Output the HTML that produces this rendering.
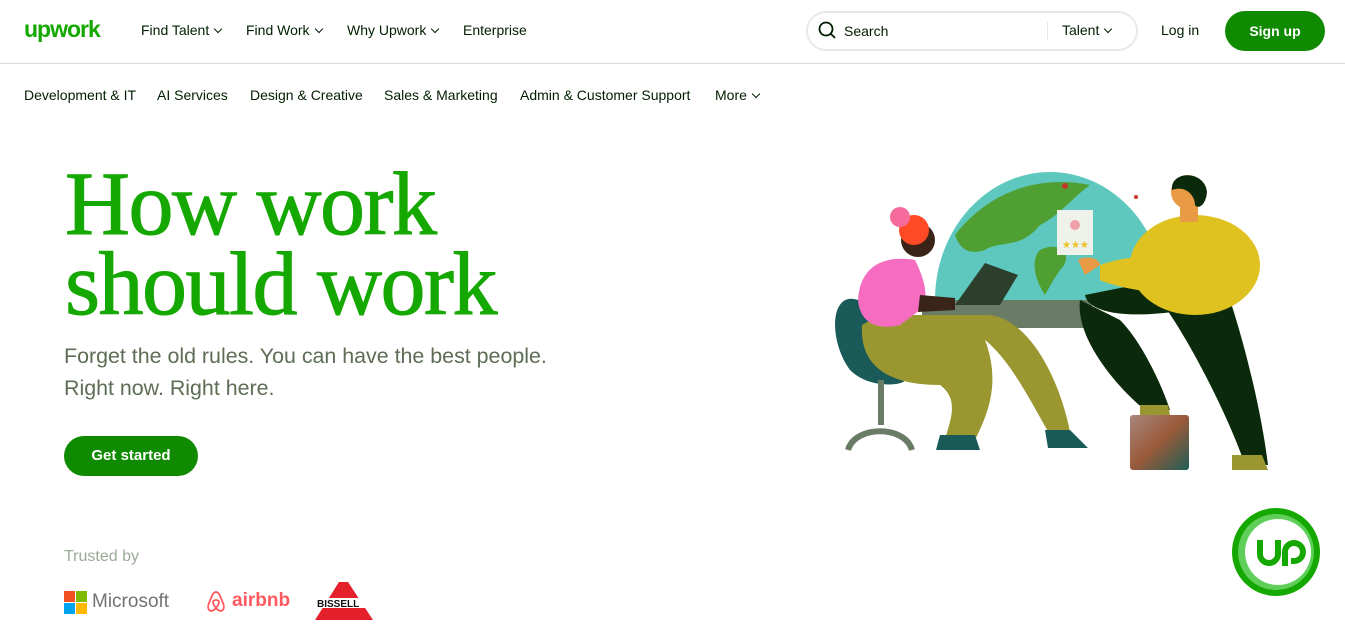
<!DOCTYPE html>
<html><head><meta charset="utf-8"><style>
*{margin:0;padding:0;box-sizing:border-box}
body{width:1345px;height:631px;overflow:hidden;background:#fff;font-family:"Liberation Sans",Arial,sans-serif;color:#001e00;position:relative}
.a{position:absolute;white-space:nowrap}
.nav{font-size:14px;color:#001e00}
.chev{display:inline-block;width:6px;height:6px;border-right:1.5px solid #001e00;border-bottom:1.5px solid #001e00;transform:rotate(45deg);margin-left:6px;position:relative;top:-3px}
</style></head><body>
<div class="a" style="left:24px;top:16px;font-size:23px;font-weight:bold;color:#14a800;letter-spacing:-1px">upwork</div>
<div class="a nav" style="left:141px;top:22px">Find Talent<span class="chev"></span></div>
<div class="a nav" style="left:246px;top:22px">Find Work<span class="chev"></span></div>
<div class="a nav" style="left:347px;top:22px">Why Upwork<span class="chev"></span></div>
<div class="a nav" style="left:463px;top:22px">Enterprise</div>
<div class="a" style="left:806px;top:11px;width:332px;height:40px;border:2px solid #e4ebe4;border-radius:20px"></div>
<svg class="a" style="left:818px;top:21px" width="20" height="20" viewBox="0 0 20 20"><circle cx="8" cy="8" r="6.5" fill="none" stroke="#001e00" stroke-width="1.8"/><line x1="12.8" y1="12.8" x2="17" y2="17" stroke="#001e00" stroke-width="1.8"/></svg>
<div class="a nav" style="left:844px;top:23px">Search</div>
<div class="a" style="left:1047px;top:22px;width:1px;height:18px;background:#e4ebe4"></div>
<div class="a nav" style="left:1062px;top:22px">Talent<span class="chev"></span></div>
<div class="a nav" style="left:1161px;top:22px">Log in</div>
<div class="a" style="left:1225px;top:11px;width:100px;height:40px;border-radius:20px;background:#108a00;color:#fff;font-weight:bold;font-size:14px;text-align:center;line-height:40px">Sign up</div>
<div class="a" style="left:0;top:63px;width:1345px;height:1px;background:#d5e0d5"></div>
<div class="a nav" style="left:24px;top:87px">Development &amp; IT</div>
<div class="a nav" style="left:157px;top:87px">AI Services</div>
<div class="a nav" style="left:250px;top:87px">Design &amp; Creative</div>
<div class="a nav" style="left:384px;top:87px">Sales &amp; Marketing</div>
<div class="a nav" style="left:520px;top:87px">Admin &amp; Customer Support</div>
<div class="a nav" style="left:715px;top:87px">More<span class="chev"></span></div>
<div class="a" style="left:65px;top:165px;font-family:'Liberation Serif',serif;font-size:90px;line-height:80px;color:#14a800;letter-spacing:-1.5px;-webkit-text-stroke:1px #14a800">How work<br>should work</div>
<div class="a" style="left:64px;top:340px;font-size:21.4px;line-height:32px;color:#5e6d55">Forget the old rules. You can have the best people.<br>Right now. Right here.</div>
<div class="a" style="left:64px;top:436px;width:134px;height:40px;border-radius:20px;background:#108a00;color:#fff;font-weight:bold;font-size:15px;text-align:center;line-height:40px">Get started</div>
<div class="a" style="left:64px;top:548px;font-size:16px;color:#9aaa97">Trusted by</div>
<svg class="a" style="left:64px;top:591px" width="23" height="23"><rect width="11" height="11" fill="#f25022"/><rect x="12" width="11" height="11" fill="#7fba00"/><rect y="12" width="11" height="11" fill="#00a4ef"/><rect x="12" y="12" width="11" height="11" fill="#ffb900"/></svg>
<div class="a" style="left:92px;top:591px;font-size:19px;color:#737373">Microsoft</div>
<svg class="a" style="left:203px;top:589px" width="26" height="26" viewBox="0 0 26 26"><path d="M13 3 C10 3 9 7 6 14 C3 21 8 25 13 19 C18 25 23 21 20 14 C17 7 16 3 13 3 Z M13 19 C9 14 9 11 13 11 C17 11 17 14 13 19" fill="none" stroke="#ff5a5f" stroke-width="1.8"/></svg>
<div class="a" style="left:232px;top:590px;font-size:19px;font-weight:bold;color:#ff5a5f">airbnb</div>
<svg class="a" style="left:315px;top:582px" width="60" height="38"><polygon points="24,0 33,0 58,38 0,38" fill="#e4202a"/><rect x="0" y="16" width="60" height="10" fill="#fff"/><text x="2" y="25" font-family="Liberation Sans" font-size="10" font-weight="bold" fill="#111">BISSELL</text></svg>
<svg class="a" style="left:820px;top:160px" width="460" height="320" viewBox="820 160 460 320">
<defs><linearGradient id="bc" x1="0" y1="0" x2="1" y2="1"><stop offset="0" stop-color="#a8857c"/><stop offset=".5" stop-color="#9a5a3a"/><stop offset="1" stop-color="#1e5e55"/></linearGradient></defs>
<path d="M935 300 A115 128 0 0 1 1165 300 Z" fill="#5ec8be"/>
<path d="M955 235 C990 190 1040 175 1090 185 C1070 200 1060 215 1040 225 C1020 250 1000 240 985 250 C970 255 960 250 955 235 Z" fill="#4f9f33"/>
<path d="M1040 250 C1060 240 1075 255 1060 270 C1050 285 1048 290 1045 295 C1035 280 1030 260 1040 250 Z" fill="#4f9f33"/>
<rect x="922" y="300" width="170" height="28" fill="#6a7b66"/>
<path d="M985 263 L1018 275 L1000 305 L955 305 Z" fill="#2c3f2c"/>
<path d="M858 300 C830 290 828 340 850 370 C870 390 905 385 905 380 L880 340 Z" fill="#1a5a58"/>
<rect x="878" y="380" width="6" height="45" fill="#6a7b66"/>
<path d="M848 450 C855 425 905 425 912 450" fill="none" stroke="#6a7b66" stroke-width="6"/>
<path d="M862 325 C860 360 880 385 940 385 C960 400 950 420 945 440 L975 440 C990 410 1000 380 985 340 C1010 360 1030 400 1050 435 L1070 432 C1060 380 1030 320 990 315 L880 315 Z" fill="#9a9630"/>
<path d="M940 435 L975 435 L980 450 L936 450 Z" fill="#1a5a58"/>
<path d="M1045 430 L1070 430 L1088 448 L1048 448 Z" fill="#1a5a58"/>
<path d="M858 300 C860 265 885 255 915 260 C925 280 930 300 920 310 L900 325 C880 330 860 325 858 300 Z" fill="#f56cc1"/>
<path d="M920 295 L955 298 L955 310 L918 312 Z" fill="#3a2418"/>
<circle cx="918" cy="240" r="17" fill="#3a2418"/>
<circle cx="914" cy="230" r="15" fill="#ff4b25"/>
<circle cx="900" cy="217" r="10" fill="#f56c9c"/>
<path d="M1080 300 C1075 340 1120 390 1145 410 L1170 410 C1160 380 1140 340 1120 320 Z" fill="#0b2a0b"/>
<path d="M1160 300 C1190 340 1230 420 1245 465 L1268 465 C1260 400 1240 330 1230 300 Z" fill="#0b2a0b"/>
<path d="M1085 295 C1090 320 1160 320 1230 300 L1160 280 Z" fill="#0b2a0b"/>
<ellipse cx="1195" cy="265" rx="65" ry="50" fill="#dfc21f"/>
<path d="M1100 265 C1130 255 1150 255 1170 265 L1160 292 C1140 292 1110 285 1100 280 Z" fill="#dfc21f"/>
<rect x="1130" y="415" width="59" height="55" rx="3" fill="url(#bc)"/>
<path d="M1140 405 L1168 405 L1170 415 L1140 415 Z" fill="#9a9630"/>
<path d="M1232 455 L1262 455 L1268 470 L1232 470 Z" fill="#9a9630"/>
<rect x="1180" y="200" width="18" height="22" fill="#e89a45"/>
<circle cx="1188" cy="192" r="17" fill="#e89a45"/>
<path d="M1172 190 C1170 170 1205 170 1207 192 C1206 205 1198 210 1195 205 C1195 195 1185 185 1172 190 Z" fill="#0b2a0b"/>
<rect x="1057" y="210" width="36" height="45" fill="#eef2ea"/>
<circle cx="1075" cy="225" r="5" fill="#f0a0a8"/>
<text x="1062" y="248" font-size="10" fill="#f0c020">★★★</text>
<path d="M1078 260 C1085 255 1100 258 1100 265 L1085 275 Z" fill="#e89a45"/>
<circle cx="1065" cy="186" r="3" fill="#c0392b"/><circle cx="1136" cy="197" r="2" fill="#c0392b"/>
</svg>
<svg class="a" style="left:1230px;top:506px" width="92" height="92" viewBox="0 0 92 92">
<circle cx="46" cy="46" r="44" fill="#14a800"/><circle cx="46" cy="46" r="38" fill="#5fcf5a"/><circle cx="48" cy="46" r="33" fill="#fff"/>
<path d="M30 34 v14 a9 9 0 0 0 18 0 v-14" fill="none" stroke="#14a800" stroke-width="6"/>
<path d="M55 60 v-14 a9 9 0 1 1 9 9 h-3" fill="none" stroke="#14a800" stroke-width="6"/>
</svg>
</body></html>
